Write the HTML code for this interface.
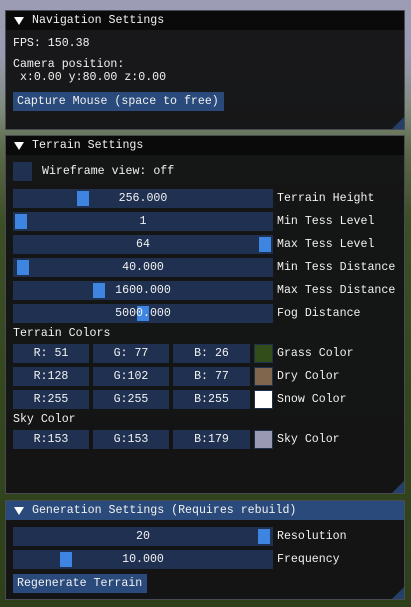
<!DOCTYPE html>
<html><head><meta charset="utf-8"><style>
*{margin:0;padding:0;box-sizing:border-box}
body{width:411px;height:607px;overflow:hidden;position:relative;font-family:"Liberation Mono",monospace;font-size:11.6px;color:#f2f2f2;
background:linear-gradient(180deg,#9c9cb5 0px,#9a9ab2 55px,#7e8a7a 110px,#5b6a4a 150px,#3d4f26 220px,#34461e 400px,#2e4019 607px);}
.win{position:absolute;left:5px;width:400px;background:rgba(19,19,21,0.96);border:1px solid #4a4a52}
.tb{height:19px;background:#0a0a0a;line-height:20px;padding-left:26px;position:relative;white-space:pre}
.tb.act{background:#294a7a}
.tri{position:absolute;left:8px;top:6px;width:0;height:0;border-left:5px solid transparent;border-right:5px solid transparent;border-top:8px solid #fff}
.a{position:absolute;white-space:pre;line-height:20px}
.f{position:absolute;background:#1f3050;height:19px;line-height:20px;text-align:center;white-space:pre}
.g{position:absolute;top:2px;width:12px;height:15px;background:#3d85e0}
.btn{position:absolute;background:#294a7a;height:19px;line-height:20px;padding:0 4px;white-space:pre}
.sw{position:absolute;width:19px;height:19px;border:1px solid #1f3050}
.grip{position:absolute;right:0;bottom:0;width:0;height:0;border-left:12px solid transparent;border-bottom:12px solid #24406a}
</style></head><body>
<div class="win" style="top:10px;height:120px">
<div class="tb"><span class="tri"></span>Navigation Settings</div>
<div class="grip"></div>
</div>
<div class="a" style="left:13px;top:34px">FPS: 150.38</div>
<div class="a" style="left:13px;top:55px">Camera position:</div>
<div class="a" style="left:13px;top:68px"> x:0.00 y:80.00 z:0.00</div>
<div class="btn" style="left:13px;top:92px;width:211px">Capture Mouse (space to free)</div>

<div class="win" style="top:135px;height:359px">
<div class="tb"><span class="tri"></span>Terrain Settings</div>
<div class="grip"></div>
</div>
<div class="f" style="left:13px;top:162px;width:19px"></div>
<div class="a" style="left:42px;top:162px">Wireframe view: off</div>

<div class="f" style="left:13px;top:189px;width:260px"><div class="g" style="left:64px"></div><span style="position:relative">256.000</span></div><div class="a" style="left:277px;top:189px">Terrain Height</div>
<div class="f" style="left:13px;top:212px;width:260px"><div class="g" style="left:2px"></div><span style="position:relative">1</span></div><div class="a" style="left:277px;top:212px">Min Tess Level</div>
<div class="f" style="left:13px;top:235px;width:260px"><div class="g" style="left:246px"></div><span style="position:relative">64</span></div><div class="a" style="left:277px;top:235px">Max Tess Level</div>
<div class="f" style="left:13px;top:258px;width:260px"><div class="g" style="left:4px"></div><span style="position:relative">40.000</span></div><div class="a" style="left:277px;top:258px">Min Tess Distance</div>
<div class="f" style="left:13px;top:281px;width:260px"><div class="g" style="left:80px"></div><span style="position:relative">1600.000</span></div><div class="a" style="left:277px;top:281px">Max Tess Distance</div>
<div class="f" style="left:13px;top:304px;width:260px"><div class="g" style="left:124px"></div><span style="position:relative">5000.000</span></div><div class="a" style="left:277px;top:304px">Fog Distance</div>

<div class="a" style="left:13px;top:324px">Terrain Colors</div>
<div class="f" style="left:13px;top:344px;width:76px">R: 51</div><div class="f" style="left:93px;top:344px;width:76px">G: 77</div><div class="f" style="left:173px;top:344px;width:77px">B: 26</div><div class="sw" style="left:254px;top:344px;background:#334d1a"></div><div class="a" style="left:277px;top:344px">Grass Color</div>
<div class="f" style="left:13px;top:367px;width:76px">R:128</div><div class="f" style="left:93px;top:367px;width:76px">G:102</div><div class="f" style="left:173px;top:367px;width:77px">B: 77</div><div class="sw" style="left:254px;top:367px;background:#80664d"></div><div class="a" style="left:277px;top:367px">Dry Color</div>
<div class="f" style="left:13px;top:390px;width:76px">R:255</div><div class="f" style="left:93px;top:390px;width:76px">G:255</div><div class="f" style="left:173px;top:390px;width:77px">B:255</div><div class="sw" style="left:254px;top:390px;background:#fff"></div><div class="a" style="left:277px;top:390px">Snow Color</div>
<div class="a" style="left:13px;top:410px">Sky Color</div>
<div class="f" style="left:13px;top:430px;width:76px">R:153</div><div class="f" style="left:93px;top:430px;width:76px">G:153</div><div class="f" style="left:173px;top:430px;width:77px">B:179</div><div class="sw" style="left:254px;top:430px;background:#9999b3"></div><div class="a" style="left:277px;top:430px">Sky Color</div>

<div class="win" style="top:500px;height:100px">
<div class="tb act"><span class="tri"></span>Generation Settings (Requires rebuild)</div>
<div class="grip"></div>
</div>
<div class="f" style="left:13px;top:527px;width:260px"><div class="g" style="left:245px"></div><span style="position:relative">20</span></div><div class="a" style="left:277px;top:527px">Resolution</div>
<div class="f" style="left:13px;top:550px;width:260px"><div class="g" style="left:47px"></div><span style="position:relative">10.000</span></div><div class="a" style="left:277px;top:550px">Frequency</div>
<div class="btn" style="left:13px;top:574px;width:134px">Regenerate Terrain</div>
</body></html>
